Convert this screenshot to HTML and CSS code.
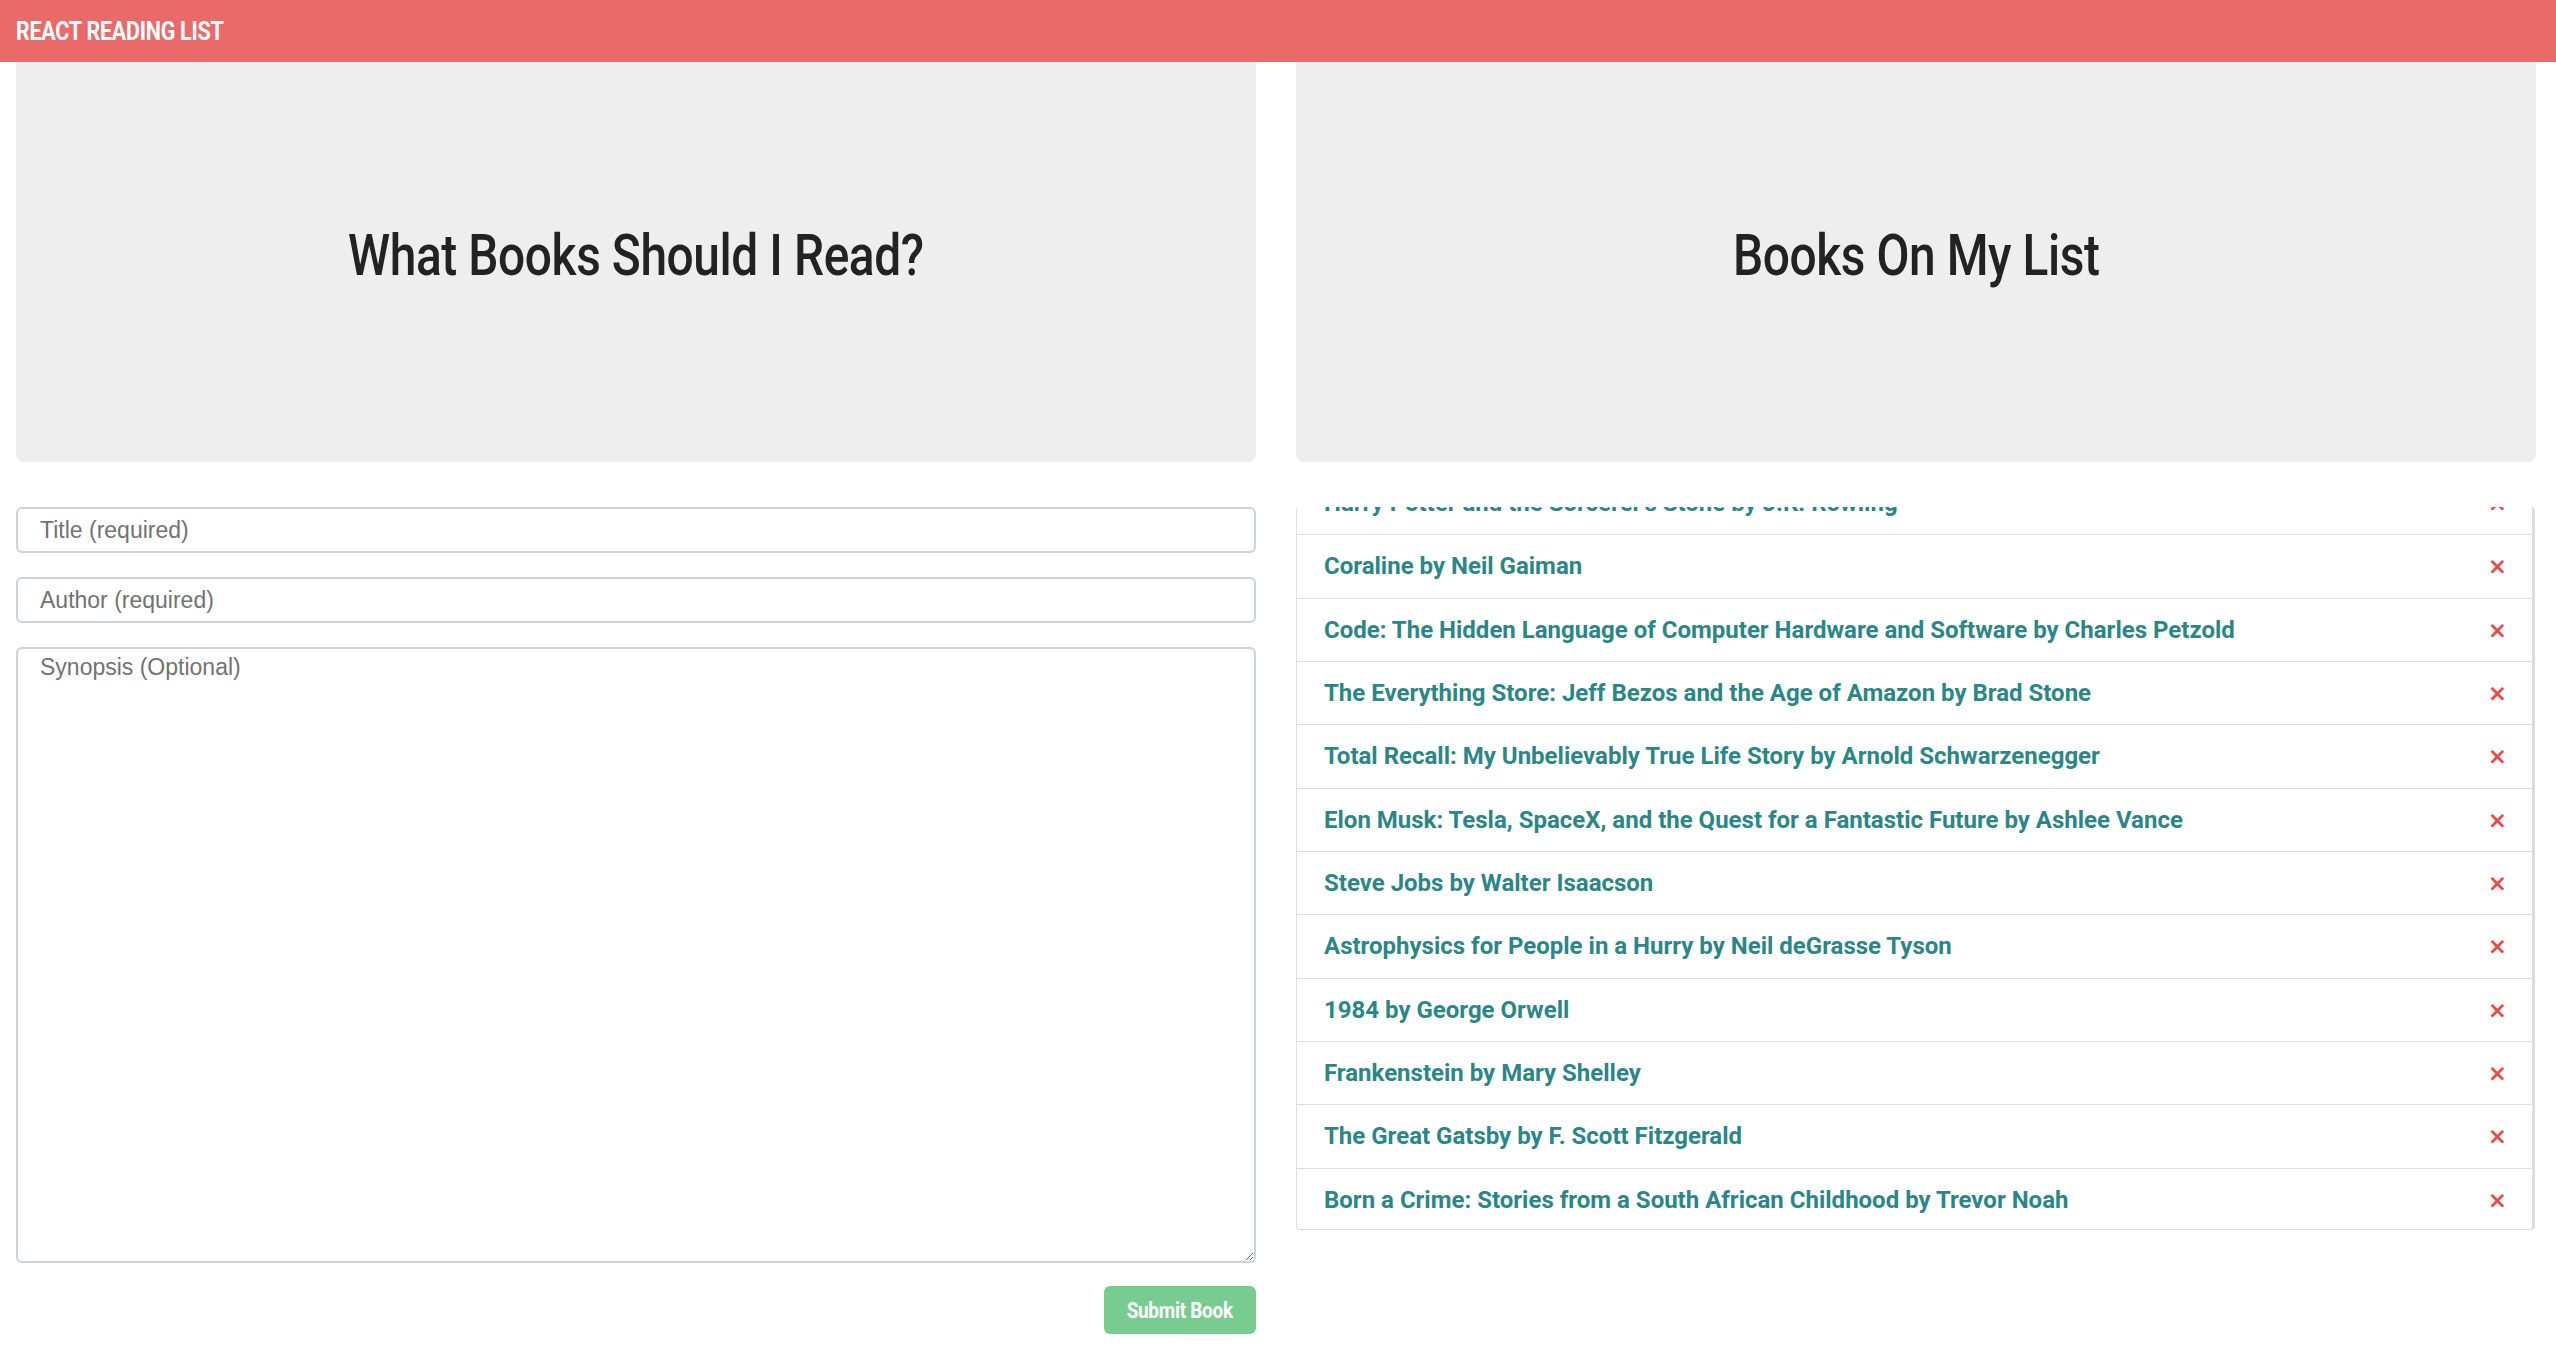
FILE: index.html
```html
<!DOCTYPE html>
<html>
<head>
<meta charset="utf-8">
<title>React Reading List</title>
<link rel="stylesheet" href="styles.css">
</head>
<body>
<header class="topbar"><span class="brand">REACT READING LIST</span></header>
<main class="columns">
  <section class="col col-left">
    <div class="jumbo"><h1 class="jumbo-title">What Books Should I Read?</h1></div>
    <form class="book-form">
      <input class="field" type="text" placeholder="Title (required)">
      <input class="field" type="text" placeholder="Author (required)">
      <textarea class="field field-area" placeholder="Synopsis (Optional)"></textarea>
      <div class="form-actions"><button type="button" class="submit-btn"><span class="btn-label">Submit Book</span></button></div>
    </form>
  </section>
  <section class="col col-right">
    <div class="jumbo"><h1 class="jumbo-title">Books On My List</h1></div>
    <div class="list-view">
      <ul class="book-list">
        <li class="book-item"><span class="book-name">Harry Potter and the Sorcerer's Stone by J.K. Rowling</span><span class="remove">×</span></li>
        <li class="book-item"><span class="book-name">Coraline by Neil Gaiman</span><span class="remove">×</span></li>
        <li class="book-item"><span class="book-name">Code: The Hidden Language of Computer Hardware and Software by Charles Petzold</span><span class="remove">×</span></li>
        <li class="book-item"><span class="book-name">The Everything Store: Jeff Bezos and the Age of Amazon by Brad Stone</span><span class="remove">×</span></li>
        <li class="book-item"><span class="book-name">Total Recall: My Unbelievably True Life Story by Arnold Schwarzenegger</span><span class="remove">×</span></li>
        <li class="book-item"><span class="book-name">Elon Musk: Tesla, SpaceX, and the Quest for a Fantastic Future by Ashlee Vance</span><span class="remove">×</span></li>
        <li class="book-item"><span class="book-name">Steve Jobs by Walter Isaacson</span><span class="remove">×</span></li>
        <li class="book-item"><span class="book-name">Astrophysics for People in a Hurry by Neil deGrasse Tyson</span><span class="remove">×</span></li>
        <li class="book-item"><span class="book-name">1984 by George Orwell</span><span class="remove">×</span></li>
        <li class="book-item"><span class="book-name">Frankenstein by Mary Shelley</span><span class="remove">×</span></li>
        <li class="book-item"><span class="book-name">The Great Gatsby by F. Scott Fitzgerald</span><span class="remove">×</span></li>
        <li class="book-item"><span class="book-name">Born a Crime: Stories from a South African Childhood by Trevor Noah</span><span class="remove">×</span></li>
      </ul>
    </div>
  </section>
</main>
</body>
</html>
```

FILE: styles.css
```css
* { box-sizing: border-box; }
body {
  margin: 0;
  background: #ffffff;
  font-family: "Liberation Sans", Arial, sans-serif;
}
.topbar {
  height: 62px;
  background: #ea6a69;
  display: flex;
  align-items: center;
  padding-left: 16px;
}
.brand {
  display: inline-block;
  color: #ffffff;
  font-family: "Roboto", "Liberation Sans", sans-serif;
  font-weight: 700;
  font-size: 25px;
  letter-spacing: -0.3px;
  transform: scaleX(0.86);
  transform-origin: left center;
  white-space: nowrap;
}
.columns {
  display: grid;
  grid-template-columns: 1240px 1240px;
  column-gap: 40px;
  padding: 0 20px 0 16px;
}
.jumbo {
  height: 400px;
  background: #eeeeee;
  border-radius: 0 0 8px 8px;
  display: flex;
  align-items: center;
  justify-content: center;
}
.jumbo-title {
  display: inline-block;
  margin: 0;
  margin-top: -14px;
  font-family: "Roboto", "Liberation Sans", sans-serif;
  font-weight: 500;
  font-size: 58px;
  color: #222222;
  letter-spacing: -0.5px;
  transform: scaleX(0.825);
  transform-origin: center center;
  white-space: nowrap;
}
.book-form {
  margin-top: 45px;
  display: flex;
  flex-direction: column;
  gap: 24px;
}
.field {
  display: block;
  width: 100%;
  height: 46px;
  border: 2px solid #cfd3d8;
  border-radius: 6px;
  padding: 0 22px;
  font-family: "Liberation Sans", Arial, sans-serif;
  font-size: 23px;
  color: #555;
  background: #fff;
}
.field::placeholder { color: #727272; }
.field-area {
  height: 616px;
  padding-top: 5px;
  resize: vertical;
}
.form-actions {
  display: flex;
  justify-content: flex-end;
  margin-top: -1px;
}
.submit-btn {
  width: 152px;
  height: 48px;
  border: none;
  border-radius: 6px;
  background: #78cc8f;
  padding: 0;
  display: flex;
  align-items: center;
  justify-content: center;
}
.btn-label {
  display: inline-block;
  color: #ffffff;
  font-family: "Roboto", "Liberation Sans", sans-serif;
  font-weight: 700;
  font-size: 22px;
  letter-spacing: -0.3px;
  transform: scaleX(0.86);
  white-space: nowrap;
}
.list-view {
  margin-top: 45px;
  height: 723px;
  overflow: hidden;
  border: 1px solid #dddddd;
  border-right: 3px solid #dcdcdc;
  border-top: none;
  border-radius: 4px;
  width: 1239px;
}
.book-list {
  list-style: none;
  margin: -35px 0 0 0;
  padding: 0;
}
.book-item {
  height: 63.33px;
  display: flex;
  align-items: center;
  justify-content: space-between;
  padding: 0 25px 0 27px;
  border-bottom: 1px solid #dddddd;
}
.book-item:last-child { border-bottom: none; }
.book-name {
  color: #2b8686;
  font-family: "Roboto", "Liberation Sans", sans-serif;
  font-weight: 700;
  font-size: 24px;
}
.remove {
  color: #e84a4a;
  font-family: "DejaVu Sans", sans-serif;
  font-weight: 700;
  font-size: 23px;
}
```
